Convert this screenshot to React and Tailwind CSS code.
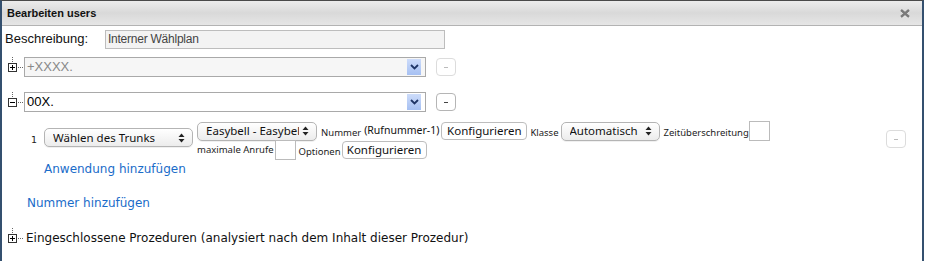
import React from 'react';

const TreeIcon = ({ open }) => (
  <svg width="18" height="20" viewBox="0 0 18 20" className="shrink-0">
    <line x1="7.5" y1="0" x2="7.5" y2="5" stroke="#666" strokeWidth="1" strokeDasharray="1 1" />
    <line x1="13" y1="10.5" x2="18" y2="10.5" stroke="#666" strokeWidth="1" strokeDasharray="1 1" />
    <rect x="3.5" y="6.5" width="8" height="8" fill="#fff" stroke="#333" strokeWidth="1" />
    <line x1="5" y1="10.5" x2="10" y2="10.5" stroke="#000" strokeWidth="1" />
    {!open && <line x1="7.5" y1="8" x2="7.5" y2="13" stroke="#000" strokeWidth="1" />}
  </svg>
);

const BlueSelect = ({ value, muted }) => (
  <div className={`w-[402px] h-[20px] border border-[#a9a9a9] flex items-center justify-between ${muted ? 'bg-[#f6f6f6]' : 'bg-white'}`}>
    <span className={`pl-[2px] text-[13px] font-['Liberation_Sans',sans-serif] ${muted ? 'text-[#888]' : 'text-black'}`}>{value}</span>
    <span className="mr-[4px] w-[14px] h-[16px] bg-gradient-to-b from-[#cddcfa] to-[#a6c0f2] flex items-center justify-center">
      <svg width="9" height="6" viewBox="0 0 9 6">
        <path d="M1 1 L4.5 4.5 L8 1" fill="none" stroke="#1f3566" strokeWidth="1.8" />
      </svg>
    </span>
  </div>
);

const MinusBtn = ({ faded }) => (
  <div className={`w-[20px] h-[18px] rounded-[4px] border bg-white flex items-center justify-center ${faded ? 'border-[#dcdcdc]' : 'border-[#b5b5b5]'}`}>
    <span className={`block w-[4px] h-px ${faded ? 'bg-[#bbb]' : 'bg-[#444]'}`} />
  </div>
);

const Updown = () => (
  <svg width="7" height="10" viewBox="0 0 7 10">
    <path d="M3.5 0.5 L6.5 4 L0.5 4 Z" fill="#222" />
    <path d="M3.5 9.5 L6.5 6 L0.5 6 Z" fill="#222" />
  </svg>
);

const MacSelect = ({ label, width }) => (
  <div className={`${width} h-[19px] shrink-0 rounded-[5px] border border-[#b4b4b4] bg-gradient-to-b from-white to-[#ececec] shadow-[0_1px_0_rgba(0,0,0,0.06)] flex items-center justify-between pl-[8px] pr-[7px] overflow-hidden`}>
    <span className="text-[11.5px] text-[#111] whitespace-nowrap overflow-hidden font-['Noto_Sans',sans-serif]">{label}</span>
    <span className="shrink-0 pl-[3px]"><Updown /></span>
  </div>
);

const MacButton = ({ children, w }) => (
  <div className={`${w} h-[18px] shrink-0 rounded-[4px] border border-[#bdbdbd] bg-white flex items-center justify-center text-[11.5px] text-[#111] font-['Noto_Sans',sans-serif]`}>
    {children}
  </div>
);

const Lbl = ({ children }) => (
  <span className="text-[9.5px] text-[#222] whitespace-nowrap font-['Noto_Sans',sans-serif]">{children}</span>
);

const SmallInput = () => <div className="w-[21px] h-[20px] border border-[#bbb] bg-white shrink-0" />;

export default function App() {
  return (
    <div className="w-[926px] h-[261px] bg-white overflow-hidden font-['DejaVu_Sans',sans-serif]">
      <div className="w-[924px] h-[261px] border-l-2 border-r-2 border-t border-l-[#34506f] border-r-[#34506f] border-t-[#4a4a4a] flex flex-col">
        {/* header */}
        <div className="h-[25px] shrink-0 border-b border-[#b3b3b3] bg-gradient-to-b from-[#ececec] via-[#d9d9d9] to-[#e6e6e6] flex items-center justify-between pl-[5px] pr-[10px]">
          <span className="text-[11px] font-bold text-[#111] font-['Liberation_Sans',sans-serif]">Bearbeiten users</span>
          <svg width="10" height="9" viewBox="0 0 10 9" className="mt-[1px] mr-[2px]">
            <path d="M1 1 L9 8 M9 1 L1 8" stroke="#fff" strokeWidth="2.4" transform="translate(0 0.7)" />
            <path d="M1 1 L9 8 M9 1 L1 8" stroke="#7a7a7a" strokeWidth="2.4" />
          </svg>
        </div>

        {/* description */}
        <div className="flex items-center mt-[3px] h-[20px] font-['Liberation_Sans',sans-serif]">
          <span className="ml-[3px] w-[100px] text-[13px] text-[#111]">Beschreibung:</span>
          <div className="w-[340px] h-[19px] border border-[#bdbdbd] bg-[#f3f3f3] flex items-center pl-[2px] text-[12px] tracking-[-0.02em] text-[#444]">
            Interner Wählplan
          </div>
        </div>

        {/* +XXXX. */}
        <div className="flex items-center mt-[8px] ml-[3px]">
          <TreeIcon />
          <span className="ml-[1px]"><BlueSelect value="+XXXX." muted /></span>
          <span className="ml-[10px]"><MinusBtn faded /></span>
        </div>

        {/* 00X. */}
        <div className="flex items-center mt-[15px] ml-[3px]">
          <TreeIcon open />
          <span className="ml-[1px]"><BlueSelect value="00X." /></span>
          <span className="ml-[10px]"><MinusBtn /></span>
        </div>

        {/* trunk row */}
        <div className="flex items-start mt-[9px]">
          <span className="ml-[29px] mt-[12px] text-[9.5px] text-[#222]">1</span>
          <div className="ml-[7px] mt-[7px]"><MacSelect label="Wählen des Trunks" width="w-[149px]" /></div>
          <div className="ml-[4px] flex flex-col">
            <div className="flex items-center h-[20px]">
              <MacSelect label="Easybell - Easybell" width="w-[120px]" />
              <span className="ml-[4px]"><Lbl>Nummer</Lbl></span>
              <span className="ml-[3px] text-[10.5px] text-[#111] whitespace-nowrap font-['Noto_Sans',sans-serif]">(Rufnummer-1)</span>
              <span className="ml-[2px]"><MacButton w="w-[86px]">Konfigurieren</MacButton></span>
              <span className="ml-[3px]"><Lbl>Klasse</Lbl></span>
              <span className="ml-[2px]"><MacSelect label="Automatisch" width="w-[99px]" /></span>
              <span className="ml-[4px]"><Lbl>Zeitüberschreitung</Lbl></span>
              <SmallInput />
            </div>
            <div className="flex items-center h-[20px] mt-[-1px]">
              <Lbl>maximale Anrufe</Lbl>
              <span className="ml-[1px]"><SmallInput /></span>
              <span className="ml-[3px]"><Lbl>Optionen</Lbl></span>
              <span className="ml-[1px]"><MacButton w="w-[85px]">Konfigurieren</MacButton></span>
            </div>
          </div>
          <div className="ml-auto mr-[16px] mt-[9px]"><MinusBtn faded /></div>
        </div>

        <div className="mt-0 ml-[42px] text-[12px] text-[#1a6cc9] h-[18px] leading-[18px]">Anwendung hinzufügen</div>
        <div className="mt-[16px] ml-[25px] text-[12px] text-[#1a6cc9] h-[18px] leading-[18px]">Nummer hinzufügen</div>

        <div className="flex items-center mt-[16px] ml-[3px]">
          <TreeIcon />
          <span className="ml-[3px] text-[12px] text-[#111]">Eingeschlossene Prozeduren (analysiert nach dem Inhalt dieser Prozedur)</span>
        </div>
      </div>
    </div>
  );
}
